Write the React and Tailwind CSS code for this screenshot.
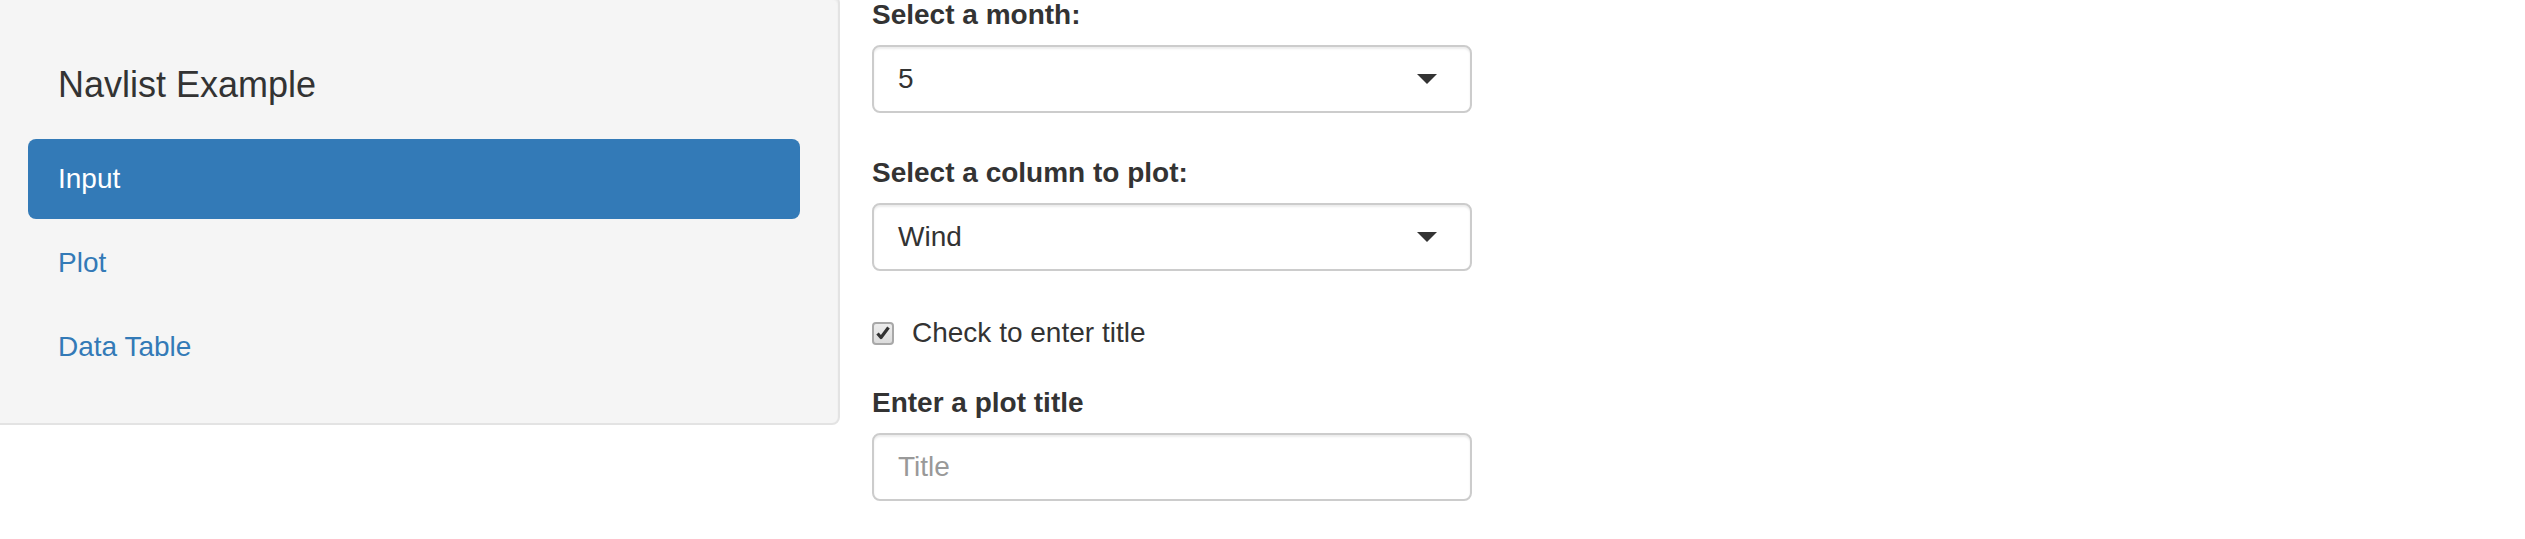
import React from 'react';

const pills = [
  { label: 'Input', active: true },
  { label: 'Plot', active: false },
  { label: 'Data Table', active: false },
];

const Caret = () => (
  <span className="h-0 w-0 border-x-[10px] border-t-[10px] border-x-transparent border-t-[#333]" />
);

const SelectBox = ({ value, className = '' }) => (
  <div
    className={`flex h-[68px] items-center justify-between rounded-[8px] border-2 border-[#ccc] bg-white pl-[24px] pr-[33px] text-[28px] leading-[40px] text-[#333] shadow-[inset_0_2px_2px_rgba(0,0,0,0.075)] ${className}`}
  >
    <span>{value}</span>
    <Caret />
  </div>
);

const FieldLabel = ({ children }) => (
  <label className="mb-[10px] block text-[28px] font-bold leading-[40px] text-[#333]">{children}</label>
);

const App = () => {
  return (
    <div className="h-[539px] w-full overflow-hidden bg-white font-['Liberation_Sans',Arial,sans-serif]">
      <div className="flex items-start">
        {/* sidebar well with the navlist */}
        <div className="-ml-[12px] -mt-[5px] w-[852px] shrink-0 rounded-[8px] border-2 border-[#e3e3e3] bg-[#f5f5f5] p-[38px] pb-[36px] shadow-[inset_0_2px_2px_rgba(0,0,0,0.05)]">
          <div className="h-[100px] p-[30px] text-[36px] leading-[40px] text-[#333]">Navlist Example</div>
          <ul className="mt-[4px] flex flex-col gap-[4px]">
            {pills.map((p) => (
              <li key={p.label}>
                <a
                  className={`block rounded-[8px] px-[30px] py-[20px] text-[28px] leading-[40px] ${
                    p.active ? 'bg-[#337ab7] text-white' : 'text-[#337ab7]'
                  }`}
                >
                  {p.label}
                </a>
              </li>
            ))}
          </ul>
        </div>

        {/* inputs */}
        <div className="-mt-[5px] ml-[32px] w-[600px] shrink-0">
          <FieldLabel>Select a month:</FieldLabel>
          <SelectBox value="5" className="mb-[40px]" />

          <FieldLabel>Select a column to plot:</FieldLabel>
          <SelectBox value="Wind" />

          <div className="mb-[30px] mt-[42px] flex h-[40px] items-center gap-[18px]">
            <span className="flex h-[23px] w-[22px] items-center justify-center rounded-[4px] border-2 border-[#a8a8a8] bg-gradient-to-b from-[#ededed] to-[#dcdcdc]">
              <svg width="16" height="16" viewBox="0 0 16 16">
                <path d="M2.5 8.5 L6 12.5 L13.5 2.5" fill="none" stroke="#333" strokeWidth="3.2" strokeLinejoin="round" />
              </svg>
            </span>
            <span className="text-[28px] leading-[40px] text-[#333]">Check to enter title</span>
          </div>

          <FieldLabel>Enter a plot title</FieldLabel>
          <input
            placeholder="Title"
            className="block h-[68px] w-full rounded-[8px] border-2 border-[#ccc] bg-white px-[24px] text-[28px] text-[#333] shadow-[inset_0_2px_2px_rgba(0,0,0,0.075)] outline-none placeholder:text-[#999]"
          />
        </div>
      </div>
    </div>
  );
};

export default App;
